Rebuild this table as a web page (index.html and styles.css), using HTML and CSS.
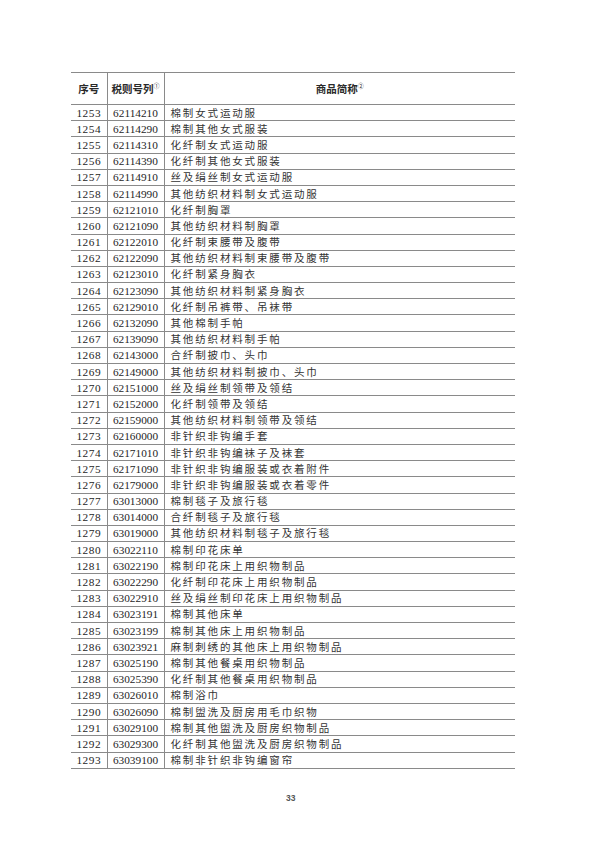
FILE: index.html
```html
<!DOCTYPE html>
<html lang="zh">
<head>
<meta charset="utf-8">
<link rel="stylesheet" href="styles.css">
</head>
<body>
<div class="page">
<table class="tbl">
<colgroup><col class="c1"><col class="c2"><col class="c3"></colgroup>
<thead>
<tr><th>序号</th><th>税则号列<sup>①</sup></th><th>商品简称<sup>②</sup></th></tr>
</thead>
<tbody>
<tr><td>1253</td><td>62114210</td><td>棉制女式运动服</td></tr>
<tr><td>1254</td><td>62114290</td><td>棉制其他女式服装</td></tr>
<tr><td>1255</td><td>62114310</td><td>化纤制女式运动服</td></tr>
<tr><td>1256</td><td>62114390</td><td>化纤制其他女式服装</td></tr>
<tr><td>1257</td><td>62114910</td><td>丝及绢丝制女式运动服</td></tr>
<tr><td>1258</td><td>62114990</td><td>其他纺织材料制女式运动服</td></tr>
<tr><td>1259</td><td>62121010</td><td>化纤制胸罩</td></tr>
<tr><td>1260</td><td>62121090</td><td>其他纺织材料制胸罩</td></tr>
<tr><td>1261</td><td>62122010</td><td>化纤制束腰带及腹带</td></tr>
<tr><td>1262</td><td>62122090</td><td>其他纺织材料制束腰带及腹带</td></tr>
<tr><td>1263</td><td>62123010</td><td>化纤制紧身胸衣</td></tr>
<tr><td>1264</td><td>62123090</td><td>其他纺织材料制紧身胸衣</td></tr>
<tr><td>1265</td><td>62129010</td><td>化纤制吊裤带、吊袜带</td></tr>
<tr><td>1266</td><td>62132090</td><td>其他棉制手帕</td></tr>
<tr><td>1267</td><td>62139090</td><td>其他纺织材料制手帕</td></tr>
<tr><td>1268</td><td>62143000</td><td>合纤制披巾、头巾</td></tr>
<tr><td>1269</td><td>62149000</td><td>其他纺织材料制披巾、头巾</td></tr>
<tr><td>1270</td><td>62151000</td><td>丝及绢丝制领带及领结</td></tr>
<tr><td>1271</td><td>62152000</td><td>化纤制领带及领结</td></tr>
<tr><td>1272</td><td>62159000</td><td>其他纺织材料制领带及领结</td></tr>
<tr><td>1273</td><td>62160000</td><td>非针织非钩编手套</td></tr>
<tr><td>1274</td><td>62171010</td><td>非针织非钩编袜子及袜套</td></tr>
<tr><td>1275</td><td>62171090</td><td>非针织非钩编服装或衣着附件</td></tr>
<tr><td>1276</td><td>62179000</td><td>非针织非钩编服装或衣着零件</td></tr>
<tr><td>1277</td><td>63013000</td><td>棉制毯子及旅行毯</td></tr>
<tr><td>1278</td><td>63014000</td><td>合纤制毯子及旅行毯</td></tr>
<tr><td>1279</td><td>63019000</td><td>其他纺织材料制毯子及旅行毯</td></tr>
<tr><td>1280</td><td>63022110</td><td>棉制印花床单</td></tr>
<tr><td>1281</td><td>63022190</td><td>棉制印花床上用织物制品</td></tr>
<tr><td>1282</td><td>63022290</td><td>化纤制印花床上用织物制品</td></tr>
<tr><td>1283</td><td>63022910</td><td>丝及绢丝制印花床上用织物制品</td></tr>
<tr><td>1284</td><td>63023191</td><td>棉制其他床单</td></tr>
<tr><td>1285</td><td>63023199</td><td>棉制其他床上用织物制品</td></tr>
<tr><td>1286</td><td>63023921</td><td>麻制刺绣的其他床上用织物制品</td></tr>
<tr><td>1287</td><td>63025190</td><td>棉制其他餐桌用织物制品</td></tr>
<tr><td>1288</td><td>63025390</td><td>化纤制其他餐桌用织物制品</td></tr>
<tr><td>1289</td><td>63026010</td><td>棉制浴巾</td></tr>
<tr><td>1290</td><td>63026090</td><td>棉制盥洗及厨房用毛巾织物</td></tr>
<tr><td>1291</td><td>63029100</td><td>棉制其他盥洗及厨房织物制品</td></tr>
<tr><td>1292</td><td>63029300</td><td>化纤制其他盥洗及厨房织物制品</td></tr>
<tr><td>1293</td><td>63039100</td><td>棉制非针织非钩编窗帘</td></tr>
</tbody>
</table>
<div class="pagenum">33</div>
</div>
</body>
</html>
```

FILE: styles.css
```css
html, body {
  margin: 0;
  padding: 0;
  background: #ffffff;
}
.page {
  width: 600px;
  height: 848px;
  padding-top: 72px;
  box-sizing: border-box;
  font-family: "Liberation Serif", "Noto Sans CJK SC", serif;
  color: #1e1e1e;
}
.tbl {
  margin-left: 71px;
  width: 444px;
  border-collapse: collapse;
  table-layout: fixed;
}
.c1 { width: 36px; }
.c2 { width: 57px; }
.c3 { width: 351px; }
.tbl th, .tbl td {
  padding: 0;
  border: 1px solid #8a8a8a;
  line-height: 14px;
  white-space: nowrap;
  overflow: hidden;
}
.tbl tr > :first-child { border-left: none; }
.tbl tr > :last-child { border-right: none; }
.tbl thead th {
  height: 31px;
  font-size: 10.5px;
  font-weight: bold;
  font-family: "Noto Sans CJK SC", sans-serif;
  text-align: center;
  border-top: 1.5px solid #8a8a8a;
  color: #2a2a2a;
}
.tbl th sup {
  font-size: 6px;
  font-weight: normal;
  vertical-align: 5px;
  line-height: 0;
}
.tbl tbody td {
  height: 15.2px;
  font-size: 11.3px;
  letter-spacing: 0;
  text-align: center;
}
.tbl tbody td:first-child {
  letter-spacing: 0.5px;
}
.tbl tbody td:last-child {
  text-align: left;
  padding-left: 6px;
  font-family: "Noto Sans CJK SC", sans-serif;
  font-size: 10.5px;
  letter-spacing: 1.85px;
  color: #333;
}
.pagenum {
  margin-top: 24px;
  margin-left: 286px;
  font-family: "Liberation Sans", sans-serif;
  font-size: 8.5px;
  font-weight: bold;
  color: #555;
}
```
